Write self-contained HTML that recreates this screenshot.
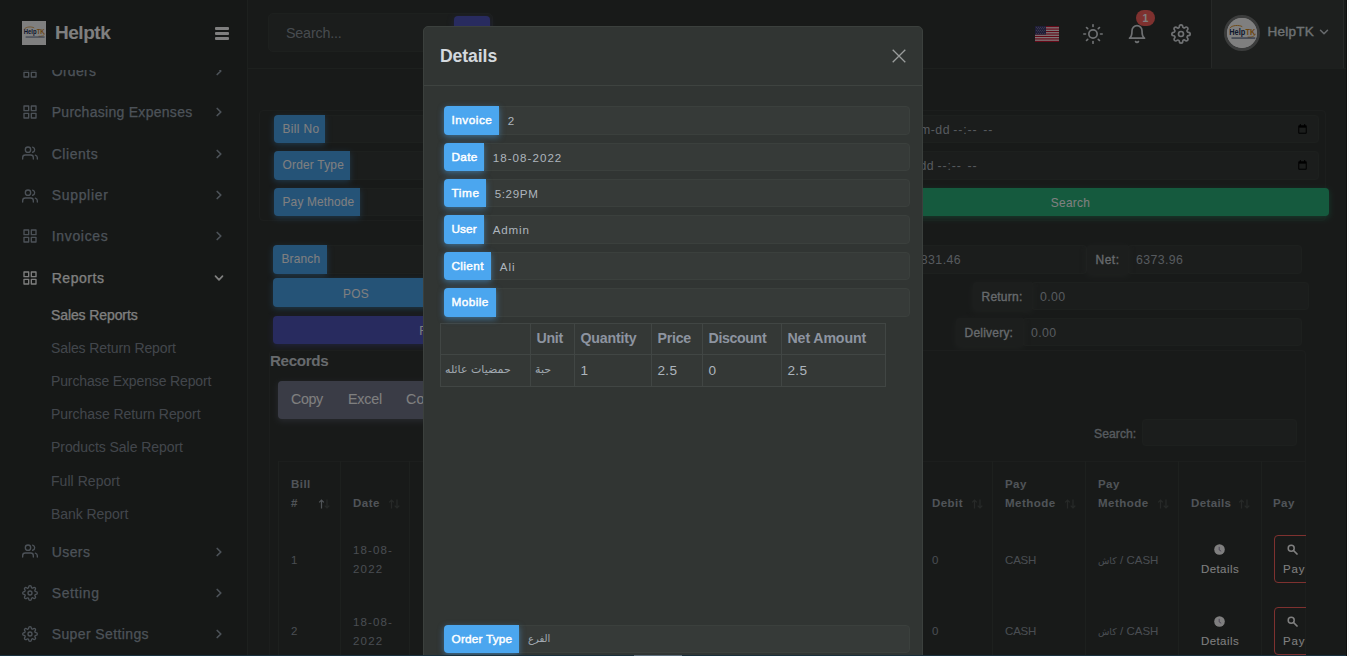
<!DOCTYPE html>
<html lang="en">
<head>
<meta charset="utf-8">
<title>Helptk - Sales Reports</title>
<style>
*{box-sizing:border-box;margin:0;padding:0}
html,body{width:1349px;height:656px;overflow:hidden;background:#313533;font-family:"Liberation Sans","DejaVu Sans",sans-serif;font-size:13px;color:#adb5bd}
.abs{position:absolute}
svg{display:block}
/* ---------- sidebar ---------- */
#sidebar{z-index:2;position:absolute;left:0;top:0;width:248px;height:656px;background:#2c302e;border-right:1px solid #3b403d;overflow:hidden}
#brand{position:absolute;left:0;top:0;width:247px;height:70px;background:#2c302e;z-index:3}
#logo{position:absolute;left:22px;top:21px;width:24px;height:24px;background:#ffffff;overflow:hidden}
#brandname{position:absolute;left:55px;top:21px;font-weight:bold;color:#ffffff;line-height:24px}
#burger{position:absolute;left:214.8px;top:26.5px;width:14.6px;height:13px}
#burger i{position:absolute;left:0;width:14.6px;height:3px;border-radius:1px;background:#ffffff}
.mi{position:absolute;left:0;width:247px;height:24px;color:#99a4b1;font-size:14px;line-height:24px;-webkit-text-stroke:.25px currentColor}
.mi .ic{position:absolute;left:22px;top:4px;width:16px;height:16px;stroke:#99a4b1;fill:none;stroke-width:2;stroke-linecap:round;stroke-linejoin:round}
.mi .tx{position:absolute;left:51.7px;top:0;white-space:nowrap}
.mi .ch{position:absolute;left:214px;top:7px;width:10px;height:10px;stroke:#99a4b1;fill:none;stroke-width:1.7;stroke-linecap:round;stroke-linejoin:round}
.mi.act{color:#ffffff}
.mi.act .ic,.mi.act .ch{stroke:#ffffff}
.si{position:absolute;left:51px;height:20px;line-height:20px;font-size:14px;color:#858d98;white-space:nowrap}
.si.act{color:#ffffff;-webkit-text-stroke:.25px currentColor}
/* ---------- header ---------- */
#header{z-index:2;position:absolute;left:248px;top:0;width:1101px;height:69px;background:#313533;border-bottom:1px solid #3b403d}
#sbox{position:absolute;left:20px;top:13px;width:225px;height:39px;background:#363a38;border:1px solid #3b403d;border-radius:5px}
#sbox span{position:absolute;left:17px;top:10px;color:#8f979f;line-height:18px}
#sbtn{position:absolute;left:185px;top:2px;width:36px;height:34px;background:#5156be;border-radius:4px;box-shadow:0 2px 6px rgba(81,86,190,.5)}
.hic{position:absolute;stroke:#dfe3e7;fill:none;stroke-width:2;stroke-linecap:round;stroke-linejoin:round}
#flag{position:absolute;left:787px;top:26px;width:24px;height:16px}
#badge{position:absolute;left:888px;top:10px;width:19px;height:16px;border-radius:8px;background:#fd625e;color:#fff;font-size:10.5px;font-weight:bold;text-align:center;line-height:16px}
#user{position:absolute;left:963px;top:0;width:133px;height:68px;background:#3a3e3c;border-left:1px solid #4c504e;border-right:1px solid #4c504e}
#avatar{position:absolute;left:12px;top:15px;width:36px;height:36px;border-radius:50%;background:#ffffff;border:3px solid #767978;overflow:hidden}
#uname{position:absolute;left:55.5px;top:23px;color:#dfe3e7;line-height:18px;-webkit-text-stroke:.35px currentColor}
/* ---------- main ---------- */
#main{z-index:1;position:absolute;left:0;top:0;width:1349px;height:656px;background:#313533;overflow:hidden}
.card{position:absolute;background:#313533;border:1px solid #383c3a;border-radius:4px}
.lbl{position:absolute;background:#4ba6ef;color:#fff;border-radius:4px 0 0 4px;font-size:12.3px;line-height:28px;height:28px;padding-left:8.5px;white-space:nowrap;box-shadow:0 2px 6px rgba(75,166,239,.5);letter-spacing:.25px}
.inp{position:absolute;background:#363a38;border:1px solid #3b403d;border-radius:4px;height:28px;font-size:12.3px;line-height:26px;color:#adb5bd;white-space:nowrap}
.dlbl{position:absolute;background:#393d3b;border-radius:4px 0 0 4px;height:29px;line-height:29px;color:#ced4da;padding-left:8.5px;white-space:nowrap;box-shadow:0 2px 6px rgba(75,80,77,.5);-webkit-text-stroke:.3px currentColor}
.th{position:absolute;font-weight:bold;color:#a0a8b0;line-height:19px;white-space:nowrap}
.td{position:absolute;color:#939ba4;line-height:19px;white-space:nowrap}
.vl{position:absolute;width:1px;background:#3b403d}
.sort{position:absolute;width:13px;height:10px}
/* ---------- modal ---------- */
#backdrop{z-index:10;position:absolute;left:0;top:0;width:1349px;height:656px;background:rgba(0,0,0,.5)}
#modal{z-index:11;position:absolute;left:423px;top:26px;width:500px;height:700px;background:#313533;border:1px solid #3b403d;border-radius:5px}
#mtitle{position:absolute;font-weight:bold;color:#d4d9de;line-height:24px}
#mhr{position:absolute;left:0;top:58px;width:498px;height:1px;background:#3e4340}
.mlbl{position:absolute;left:20px;background:#4ba6ef;color:#fff;border-radius:4px 0 0 4px;font-size:11.8px;-webkit-text-stroke:.45px #fff;line-height:28px;height:28px;padding-left:7.5px;white-space:nowrap;box-shadow:0 2px 6px rgba(75,166,239,.5);z-index:2}
.minp{position:absolute;background:#363a38;border:1px solid #3b403d;border-radius:0 4px 4px 0;height:28px;font-size:11.6px;line-height:28px;color:#adb5bd;white-space:nowrap;letter-spacing:.55px;padding-left:7.7px}
#mtable{position:absolute;left:16px;top:296px;border-collapse:collapse;font-size:13.6px;color:#adb5bd;letter-spacing:.3px}
#mtable td,#mtable th{border:1px solid #414644;height:31.5px;padding:0 0 0 5.5px;text-align:left;white-space:nowrap;background:#343836}
#mtable th{font-weight:bold;color:#8d94a0;height:31px;padding-bottom:2px}
#mtable td{height:32px;padding-bottom:1px}
#mtable td.ar{font-family:"DejaVu Sans","Liberation Sans",sans-serif;font-size:11px;padding-left:4px;letter-spacing:0;color:#a2aab2;padding-bottom:3px}
#strip-r{z-index:12;position:absolute;left:1346px;top:0;width:3px;height:656px;background:#0e0f0e}
#strip-r i{position:absolute;left:1px;top:0;width:1px;height:656px;background:#fff}
#strip-r b{position:absolute;left:2px;top:0;width:1px;height:656px;background:#f1f1f1}
#strip-b{z-index:12;position:absolute;left:0;top:655px;width:1346px;height:1px;background:#18303e}
#strip-b i{position:absolute;left:634px;top:0;width:48px;height:1px;background:#5a6e7d}
.btn{border-radius:4px;color:#fff;font-size:12.3px;text-align:center;letter-spacing:.3px}
.arab{font-family:"DejaVu Sans","Liberation Sans",sans-serif}
</style>
</head>
<body>
<svg width="0" height="0" style="position:absolute"><defs>
<symbol id="i-grid" viewBox="0 0 24 24"><rect x="3" y="3" width="7" height="7"/><rect x="14" y="3" width="7" height="7"/><rect x="14" y="14" width="7" height="7"/><rect x="3" y="14" width="7" height="7"/></symbol>
<symbol id="i-users" viewBox="0 0 24 24"><path d="M17 21v-2a4 4 0 0 0-4-4H5a4 4 0 0 0-4 4v2"/><circle cx="9" cy="7" r="4"/><path d="M23 21v-2a4 4 0 0 0-3-3.87"/><path d="M16 3.13a4 4 0 0 1 0 7.75"/></symbol>
<symbol id="i-gear" viewBox="0 0 24 24"><circle cx="12" cy="12" r="3"/><path d="M19.4 15a1.65 1.65 0 0 0 .33 1.82l.06.06a2 2 0 0 1 0 2.83 2 2 0 0 1-2.83 0l-.06-.06a1.65 1.65 0 0 0-1.82-.33 1.65 1.65 0 0 0-1 1.51V21a2 2 0 0 1-2 2 2 2 0 0 1-2-2v-.09A1.65 1.65 0 0 0 9 19.4a1.65 1.65 0 0 0-1.82.33l-.06.06a2 2 0 0 1-2.83 0 2 2 0 0 1 0-2.83l.06-.06a1.65 1.65 0 0 0 .33-1.82 1.65 1.65 0 0 0-1.51-1H3a2 2 0 0 1-2-2 2 2 0 0 1 2-2h.09A1.65 1.65 0 0 0 4.6 9a1.65 1.65 0 0 0-.33-1.82l-.06-.06a2 2 0 0 1 0-2.83 2 2 0 0 1 2.83 0l.06.06a1.65 1.65 0 0 0 1.82.33H9a1.65 1.65 0 0 0 1-1.51V3a2 2 0 0 1 2-2 2 2 0 0 1 2 2v.09a1.65 1.65 0 0 0 1 1.51 1.65 1.65 0 0 0 1.82-.33l.06-.06a2 2 0 0 1 2.83 0 2 2 0 0 1 0 2.83l-.06.06a1.65 1.65 0 0 0-.33 1.82V9a1.65 1.65 0 0 0 1.51 1H21a2 2 0 0 1 2 2 2 2 0 0 1-2 2h-.09a1.65 1.65 0 0 0-1.51 1z"/></symbol>
<symbol id="i-sun" viewBox="0 0 24 24"><circle cx="12" cy="12" r="5"/><line x1="12" y1="1" x2="12" y2="3"/><line x1="12" y1="21" x2="12" y2="23"/><line x1="4.22" y1="4.22" x2="5.64" y2="5.64"/><line x1="18.36" y1="18.36" x2="19.78" y2="19.78"/><line x1="1" y1="12" x2="3" y2="12"/><line x1="21" y1="12" x2="23" y2="12"/><line x1="4.22" y1="19.78" x2="5.64" y2="18.36"/><line x1="18.36" y1="5.64" x2="19.78" y2="4.22"/></symbol>
<symbol id="i-bell" viewBox="0 0 24 24"><path d="M18 8A6 6 0 0 0 6 8c0 7-3 9-3 9h18s-3-2-3-9"/><path d="M13.73 21a2 2 0 0 1-3.46 0"/></symbol>
<symbol id="i-cr" viewBox="0 0 10 10"><polyline points="3.2,1.5 6.8,5 3.2,8.5"/></symbol>
<symbol id="i-cd" viewBox="0 0 10 10"><polyline points="1.5,3.2 5,6.8 8.5,3.2"/></symbol>
<symbol id="i-sort" viewBox="0 0 13 10"><path d="M3.5 9.5V1M1 3.3L3.5 0.8L6 3.3" fill="none" stroke-width="1.3"/><path d="M9.5 0.5V9M7 6.7L9.5 9.2L12 6.7" fill="none" stroke-width="1.3"/></symbol>
</defs></svg>
<div id="main">
<div class="card" style="left:259px;top:110px;width:1067px;height:111px"></div>
<div class="inp" style="left:300px;top:115px;width:480px;height:28px;line-height:28px;padding-left:9px;"></div>
<div class="lbl" style="left:274px;top:115px;width:51px;height:28px;line-height:28px;font-size:11.9px;letter-spacing:0.363px">Bill No</div>
<div class="inp" style="left:300px;top:151px;width:480px;height:29px;line-height:29px;padding-left:9px;"></div>
<div class="lbl" style="left:274px;top:151px;width:76px;height:29px;line-height:29px;font-size:11.9px;letter-spacing:0.221px">Order Type</div>
<div class="inp" style="left:300px;top:188px;width:480px;height:28px;line-height:28px;padding-left:9px;"></div>
<div class="lbl" style="left:274px;top:188px;width:86px;height:28px;line-height:28px;font-size:11.9px;letter-spacing:0.167px">Pay Methode</div>
<div class="inp" style="left:850px;top:115px;width:469px;height:28px;line-height:28px;padding-left:9px;"><span style="position:absolute;right:368px;letter-spacing:.5px;font-size:12.3px">mm-dd</span><span style="position:absolute;left:102.29999999999995px;letter-spacing:.9px;font-size:12.3px">--:--</span><span style="position:absolute;left:132.29999999999995px;letter-spacing:.9px;font-size:12.3px">--</span><svg style="position:absolute;right:11.5px;top:8px;width:9px;height:10px" viewBox="0 0 10 11"><rect x="0.3" y="1.2" width="9.4" height="9.5" rx="1" fill="#000"/><rect x="1.4" y="4" width="7.2" height="5.6" fill="#363a38"/><rect x="2" y="0" width="1.2" height="2.2" fill="#000"/><rect x="6.8" y="0" width="1.2" height="2.2" fill="#000"/></svg></div>
<div class="inp" style="left:850px;top:151px;width:469px;height:29px;line-height:29px;padding-left:9px;"><span style="position:absolute;right:383.79999999999995px;letter-spacing:.5px;font-size:12.3px">mm-dd</span><span style="position:absolute;left:86.5px;letter-spacing:.9px;font-size:12.3px">--:--</span><span style="position:absolute;left:116.5px;letter-spacing:.9px;font-size:12.3px">--</span><svg style="position:absolute;right:11.5px;top:8px;width:9px;height:10px" viewBox="0 0 10 11"><rect x="0.3" y="1.2" width="9.4" height="9.5" rx="1" fill="#000"/><rect x="1.4" y="4" width="7.2" height="5.6" fill="#363a38"/><rect x="2" y="0" width="1.2" height="2.2" fill="#000"/><rect x="6.8" y="0" width="1.2" height="2.2" fill="#000"/></svg></div>
<div class="abs btn" style="left:812px;top:188px;width:517px;height:28px;background:#2ab57d;line-height:30px;font-size:11.9px;box-shadow:0 2px 6px rgba(42,181,125,.5)">Search</div>
<div class="inp" style="left:300px;top:245px;width:260px;height:29px;line-height:29px;padding-left:9px;"></div>
<div class="lbl" style="left:273px;top:245px;width:54px;height:29px;line-height:29px;font-size:11.9px;letter-spacing:0.173px">Branch</div>
<div class="abs btn" style="left:273px;top:278px;width:166px;height:29px;background:#4ba6ef;line-height:32px;font-size:11.9px;box-shadow:0 2px 6px rgba(75,166,239,.5)">POS</div>
<div class="abs btn" style="left:273px;top:316px;width:325px;height:28px;background:#5156be;line-height:31px;font-size:11.9px;box-shadow:0 2px 6px rgba(81,86,190,.5)">Reset</div>
<div class="inp" style="left:880px;top:245px;width:207px;height:29px;line-height:29px;padding-left:9px;"><span style="position:absolute;left:32.5px;letter-spacing:.45px">5831.46</span></div>
<div class="inp" style="left:1127px;top:245px;width:175px;height:29px;line-height:29px;padding-left:8px;letter-spacing:.4px">6373.96</div>
<div class="dlbl" style="left:1087px;top:245px;width:41px;height:29px;line-height:31px;font-size:12px;letter-spacing:0.515px">Net:</div>
<div class="inp" style="left:1031px;top:282px;width:278px;height:28px;line-height:28px;padding-left:8px;letter-spacing:.4px">0.00</div>
<div class="dlbl" style="left:973px;top:282px;width:59px;height:28px;line-height:31px;font-size:12px;letter-spacing:0.233px">Return:</div>
<div class="inp" style="left:1022px;top:318px;width:280px;height:28px;line-height:28px;padding-left:8px;letter-spacing:.4px">0.00</div>
<div class="dlbl" style="left:956px;top:318px;width:67px;height:28px;line-height:31px;font-size:12px;letter-spacing:0.222px">Delivery:</div>
<div class="card" style="left:269px;top:350px;width:1037px;height:330px;border-radius:4px 4px 0 0"></div>
<div class="abs" style="left:270px;top:350px;font-weight:bold;color:#ced4da;line-height:22px;font-size:15.2px;letter-spacing:-0.361px">Records</div>
<div class="abs" style="left:278px;top:381px;width:420px;height:38px;background:#74788d;border-radius:4px;box-shadow:0 2px 6px rgba(116,120,141,.5);color:#fff;line-height:37px;white-space:nowrap"><span style="position:absolute;left:13px;font-size:14.3px;letter-spacing:-0.416px">Copy</span><span style="position:absolute;left:70px;font-size:14.3px;letter-spacing:-0.206px">Excel</span><span style="position:absolute;left:128px;font-size:14.3px;letter-spacing:.2px">Column visibility</span></div>
<div class="abs" style="left:1094px;top:425px;color:#adb5bd;line-height:18px;-webkit-text-stroke:.35px currentColor;font-size:12.2px;letter-spacing:0.043px">Search:</div>
<div class="inp" style="left:1142px;top:419px;width:155px;height:27px;line-height:27px;padding-left:9px;"></div>
<div class="abs" style="left:278px;top:461px;width:1027px;height:1px;background:#383c3a"></div>
<div class="vl" style="left:278px;top:461px;height:195px"></div>
<div class="vl" style="left:340px;top:461px;height:195px"></div>
<div class="vl" style="left:409px;top:461px;height:195px"></div>
<div class="vl" style="left:992px;top:461px;height:195px"></div>
<div class="vl" style="left:1085px;top:461px;height:195px"></div>
<div class="vl" style="left:1178px;top:461px;height:195px"></div>
<div class="vl" style="left:1261px;top:461px;height:195px"></div>
<div class="th" style="left:291px;top:475px;font-size:11.5px;letter-spacing:0.443px">Bill</div>
<div class="th" style="left:291px;top:494px;font-size:11.5px">#</div>
<svg class="sort" style="left:318px;top:499px" viewBox="0 0 13 10"><path d="M3.5 9.5V1.2M1.2 3.4L3.5 1L5.8 3.4" fill="none" stroke="#a0a8b0" stroke-width="1.2"/><path d="M9 0.5V8.8M6.7 6.6L9 9L11.3 6.6" fill="none" stroke="#4e5351" stroke-width="1.2"/></svg>
<div class="th" style="left:353px;top:494px;font-size:11.5px;letter-spacing:0.494px">Date</div>
<svg class="sort" style="left:388px;top:499px" viewBox="0 0 13 10"><path d="M3.5 9.5V1.2M1.2 3.4L3.5 1L5.8 3.4" fill="none" stroke="#4e5351" stroke-width="1.2"/><path d="M9 0.5V8.8M6.7 6.6L9 9L11.3 6.6" fill="none" stroke="#4e5351" stroke-width="1.2"/></svg>
<div class="th" style="left:932px;top:494px;font-size:11.5px;letter-spacing:0.443px">Debit</div>
<svg class="sort" style="left:971px;top:499px" viewBox="0 0 13 10"><path d="M3.5 9.5V1.2M1.2 3.4L3.5 1L5.8 3.4" fill="none" stroke="#4e5351" stroke-width="1.2"/><path d="M9 0.5V8.8M6.7 6.6L9 9L11.3 6.6" fill="none" stroke="#4e5351" stroke-width="1.2"/></svg>
<div class="th" style="left:1005px;top:475px;font-size:11.5px;letter-spacing:0.426px">Pay</div>
<div class="th" style="left:1005px;top:494px;font-size:11.5px;letter-spacing:0.49px">Methode</div>
<svg class="sort" style="left:1064px;top:499px" viewBox="0 0 13 10"><path d="M3.5 9.5V1.2M1.2 3.4L3.5 1L5.8 3.4" fill="none" stroke="#4e5351" stroke-width="1.2"/><path d="M9 0.5V8.8M6.7 6.6L9 9L11.3 6.6" fill="none" stroke="#4e5351" stroke-width="1.2"/></svg>
<div class="th" style="left:1098px;top:475px;font-size:11.5px;letter-spacing:0.426px">Pay</div>
<div class="th" style="left:1098px;top:494px;font-size:11.5px;letter-spacing:0.49px">Methode</div>
<svg class="sort" style="left:1157px;top:499px" viewBox="0 0 13 10"><path d="M3.5 9.5V1.2M1.2 3.4L3.5 1L5.8 3.4" fill="none" stroke="#4e5351" stroke-width="1.2"/><path d="M9 0.5V8.8M6.7 6.6L9 9L11.3 6.6" fill="none" stroke="#4e5351" stroke-width="1.2"/></svg>
<div class="th" style="left:1191px;top:494px;font-size:11.5px;letter-spacing:0.367px">Details</div>
<svg class="sort" style="left:1238px;top:499px" viewBox="0 0 13 10"><path d="M3.5 9.5V1.2M1.2 3.4L3.5 1L5.8 3.4" fill="none" stroke="#4e5351" stroke-width="1.2"/><path d="M9 0.5V8.8M6.7 6.6L9 9L11.3 6.6" fill="none" stroke="#4e5351" stroke-width="1.2"/></svg>
<div class="th" style="left:1273px;top:494px;font-size:11.5px;letter-spacing:0.426px">Pay</div>
<div class="td" style="left:291px;top:551px;font-size:11.5px;">1</div>
<div class="td" style="left:353px;top:540.9px;font-size:11.5px;letter-spacing:1.094px;">18-08-</div>
<div class="td" style="left:353px;top:559.9px;font-size:11.5px;letter-spacing:1.209px;">2022</div>
<div class="td" style="left:932px;top:551px;font-size:11.5px;">0</div>
<div class="td" style="left:1005px;top:551px;font-size:11.5px;letter-spacing:-0.178px;">CASH</div>
<div class="td" style="left:1098px;top:551px;font-size:11.5px"><span class="arab" style="font-size:9.3px;letter-spacing:0">كاش</span><span style="font-size:11.5px;letter-spacing:-0.025px;padding-left:3.5px">/ CASH</span></div>
<svg class="abs" style="left:1214px;top:544px;width:11px;height:11px" viewBox="0 0 11 11"><circle cx="5.5" cy="5.5" r="5.3" fill="#ffffff"/><path d="M5.2 2.8V6L7.2 7.2" fill="none" stroke="#9d8fb0" stroke-width="1"/></svg>
<div class="abs" style="left:1190px;top:560px;width:60px;text-align:center;color:#ffffff;line-height:19px;font-size:11.5px;letter-spacing:0.427px">Details</div>
<div class="abs" style="left:1274px;top:535px;width:60px;height:48px;border:1px solid #fd625e;border-radius:4px"></div>
<svg class="abs" style="left:1287px;top:544px;width:11px;height:11px" viewBox="0 0 11 11"><circle cx="4.2" cy="4.2" r="3" fill="none" stroke="#ffffff" stroke-width="1.5"/><path d="M6.5 6.5L10 10" stroke="#ffffff" stroke-width="1.7" stroke-linecap="round"/></svg>
<div class="abs" style="left:1283px;top:560px;color:#ffffff;line-height:19px;font-size:11.5px;letter-spacing:0.846px">Pay</div>
<div class="td" style="left:291px;top:622.0px;font-size:11.5px;">2</div>
<div class="td" style="left:353px;top:612.5px;font-size:11.5px;letter-spacing:1.094px;">18-08-</div>
<div class="td" style="left:353px;top:631.5px;font-size:11.5px;letter-spacing:1.209px;">2022</div>
<div class="td" style="left:932px;top:622.0px;font-size:11.5px;">0</div>
<div class="td" style="left:1005px;top:622.0px;font-size:11.5px;letter-spacing:-0.178px;">CASH</div>
<div class="td" style="left:1098px;top:622.0px;font-size:11.5px"><span class="arab" style="font-size:9.3px;letter-spacing:0">كاش</span><span style="font-size:11.5px;letter-spacing:-0.025px;padding-left:3.5px">/ CASH</span></div>
<svg class="abs" style="left:1214px;top:615.5px;width:11px;height:11px" viewBox="0 0 11 11"><circle cx="5.5" cy="5.5" r="5.3" fill="#ffffff"/><path d="M5.2 2.8V6L7.2 7.2" fill="none" stroke="#9d8fb0" stroke-width="1"/></svg>
<div class="abs" style="left:1190px;top:631.5px;width:60px;text-align:center;color:#ffffff;line-height:19px;font-size:11.5px;letter-spacing:0.427px">Details</div>
<div class="abs" style="left:1274px;top:606.5px;width:60px;height:48px;border:1px solid #fd625e;border-radius:4px"></div>
<svg class="abs" style="left:1287px;top:615.5px;width:11px;height:11px" viewBox="0 0 11 11"><circle cx="4.2" cy="4.2" r="3" fill="none" stroke="#ffffff" stroke-width="1.5"/><path d="M6.5 6.5L10 10" stroke="#ffffff" stroke-width="1.7" stroke-linecap="round"/></svg>
<div class="abs" style="left:1283px;top:631.5px;color:#ffffff;line-height:19px;font-size:11.5px;letter-spacing:0.846px">Pay</div>
<div class="abs" style="left:1306px;top:351px;width:43px;height:305px;background:#313533"></div>
</div>
<div id="sidebar">
<div id="menu">
<div class="mi" style="top:59px"><svg class="ic" style="top:4px"><use href="#i-grid"/></svg><span class="tx" style="font-size:14px;letter-spacing:.3px">Orders</span><svg class="ch"><use href="#i-cr"/></svg></div>
<div class="mi" style="top:100px"><svg class="ic" style="top:4px"><use href="#i-grid"/></svg><span class="tx" style="font-size:14px;letter-spacing:0.283px">Purchasing Expenses</span><svg class="ch"><use href="#i-cr"/></svg></div>
<div class="mi" style="top:142px"><svg class="ic" style="top:3px"><use href="#i-users"/></svg><span class="tx" style="font-size:14px;letter-spacing:0.537px">Clients</span><svg class="ch"><use href="#i-cr"/></svg></div>
<div class="mi" style="top:183px"><svg class="ic" style="top:4.5px"><use href="#i-users"/></svg><span class="tx" style="font-size:14px;letter-spacing:0.678px">Supplier</span><svg class="ch"><use href="#i-cr"/></svg></div>
<div class="mi" style="top:224.2px"><svg class="ic" style="top:4.2px"><use href="#i-grid"/></svg><span class="tx" style="font-size:14px;letter-spacing:0.68px">Invoices</span><svg class="ch"><use href="#i-cr"/></svg></div>
<div class="mi act" style="top:266px"><svg class="ic" style="top:3.8px"><use href="#i-grid"/></svg><span class="tx" style="font-size:14px;letter-spacing:0.548px">Reports</span><svg class="ch"><use href="#i-cd"/></svg></div>
<div class="mi" style="top:539.5px"><svg class="ic" style="top:3.7px"><use href="#i-users"/></svg><span class="tx" style="font-size:14px;letter-spacing:0.414px">Users</span><svg class="ch"><use href="#i-cr"/></svg></div>
<div class="mi" style="top:581px"><svg class="ic" style="top:4.1px"><use href="#i-gear"/></svg><span class="tx" style="font-size:14px;letter-spacing:0.621px">Setting</span><svg class="ch"><use href="#i-cr"/></svg></div>
<div class="mi" style="top:622px"><svg class="ic" style="top:4px"><use href="#i-gear"/></svg><span class="tx" style="font-size:14px;letter-spacing:0.39px">Super Settings</span><svg class="ch"><use href="#i-cr"/></svg></div>
<div class="si act" style="top:305px;font-size:14px;letter-spacing:-0.101px">Sales Reports</div>
<div class="si" style="top:338px;font-size:14px;letter-spacing:-0.107px">Sales Return Report</div>
<div class="si" style="top:371px;font-size:14px;letter-spacing:-0.137px">Purchase Expense Report</div>
<div class="si" style="top:404px;font-size:14px;letter-spacing:-0.069px">Purchase Return Report</div>
<div class="si" style="top:437px;font-size:14px;letter-spacing:-0.061px">Products Sale Report</div>
<div class="si" style="top:471px;font-size:14px;letter-spacing:0.045px">Full Report</div>
<div class="si" style="top:504.29999999999995px;font-size:14px;letter-spacing:-0.051px">Bank Report</div>
</div>
<div id="brand">
  <div id="logo"><svg viewBox="0 0 24 24" width="100%" height="100%"><rect width="24" height="24" fill="#ffffff"/><path d="M2.2 8.2C4 5.6 9.5 5.4 12.2 6.9" fill="none" stroke="#d98a1c" stroke-width="0.7"/><path d="M16.5 15.2C19.5 15.6 22.3 14.6 22.6 12.6" fill="none" stroke="#d98a1c" stroke-width="0.6"/><text x="1.8" y="13.3" font-family="Liberation Sans, sans-serif" font-weight="bold" font-size="7.8" fill="#1a2f5a" textLength="12.8" lengthAdjust="spacingAndGlyphs">Help</text><text x="14.8" y="13.3" font-family="Liberation Sans, sans-serif" font-weight="bold" font-size="7.8" fill="#d98a1c" textLength="7.8" lengthAdjust="spacingAndGlyphs">TK</text><rect x="3.6" y="15.4" width="19" height="1.3" fill="#1a2f5a" opacity=".55"/></svg></div>
  <div id="brandname" style="font-size:19px;letter-spacing:-0.472px">Helptk</div>
  <div id="burger"><i style="top:0"></i><i style="top:5px"></i><i style="top:10px"></i></div>
</div>
</div>
<div id="header">
  <div id="sbox"><span style="font-size:14.3px;letter-spacing:-0.184px">Search...</span><div id="sbtn"></div></div>
  <svg id="flag" viewBox="0 0 24 16"><rect width="24" height="16" fill="#ffffff"/><rect y="0.000" width="24" height="1.231" fill="#c8102e"/><rect y="2.462" width="24" height="1.231" fill="#c8102e"/><rect y="4.923" width="24" height="1.231" fill="#c8102e"/><rect y="7.385" width="24" height="1.231" fill="#c8102e"/><rect y="9.846" width="24" height="1.231" fill="#c8102e"/><rect y="12.308" width="24" height="1.231" fill="#c8102e"/><rect y="14.769" width="24" height="1.231" fill="#c8102e"/><rect width="11" height="8.6" fill="#3c3b6e"/><circle cx="1.40" cy="1.20" r="0.45" fill="#b8b8d0"/><circle cx="3.50" cy="1.20" r="0.45" fill="#b8b8d0"/><circle cx="5.60" cy="1.20" r="0.45" fill="#b8b8d0"/><circle cx="7.70" cy="1.20" r="0.45" fill="#b8b8d0"/><circle cx="9.80" cy="1.20" r="0.45" fill="#b8b8d0"/><circle cx="2.45" cy="2.75" r="0.45" fill="#b8b8d0"/><circle cx="4.55" cy="2.75" r="0.45" fill="#b8b8d0"/><circle cx="6.65" cy="2.75" r="0.45" fill="#b8b8d0"/><circle cx="8.75" cy="2.75" r="0.45" fill="#b8b8d0"/><circle cx="1.40" cy="4.30" r="0.45" fill="#b8b8d0"/><circle cx="3.50" cy="4.30" r="0.45" fill="#b8b8d0"/><circle cx="5.60" cy="4.30" r="0.45" fill="#b8b8d0"/><circle cx="7.70" cy="4.30" r="0.45" fill="#b8b8d0"/><circle cx="9.80" cy="4.30" r="0.45" fill="#b8b8d0"/><circle cx="2.45" cy="5.85" r="0.45" fill="#b8b8d0"/><circle cx="4.55" cy="5.85" r="0.45" fill="#b8b8d0"/><circle cx="6.65" cy="5.85" r="0.45" fill="#b8b8d0"/><circle cx="8.75" cy="5.85" r="0.45" fill="#b8b8d0"/><circle cx="1.40" cy="7.40" r="0.45" fill="#b8b8d0"/><circle cx="3.50" cy="7.40" r="0.45" fill="#b8b8d0"/><circle cx="5.60" cy="7.40" r="0.45" fill="#b8b8d0"/><circle cx="7.70" cy="7.40" r="0.45" fill="#b8b8d0"/><circle cx="9.80" cy="7.40" r="0.45" fill="#b8b8d0"/></svg>
  <svg class="hic" style="left:835px;top:24px;width:20px;height:20px"><use href="#i-sun"/></svg>
  <svg class="hic" style="left:879px;top:24px;width:20px;height:20px"><use href="#i-bell"/></svg>
  <div id="badge">1</div>
  <svg class="hic" style="left:923px;top:24px;width:20px;height:20px"><use href="#i-gear"/></svg>
  <div id="user"><div id="avatar"><svg viewBox="0 0 24 24" width="100%" height="100%"><rect width="24" height="24" fill="#ffffff"/><path d="M2.2 8.2C4 5.6 9.5 5.4 12.2 6.9" fill="none" stroke="#d98a1c" stroke-width="0.7"/><path d="M16.5 15.2C19.5 15.6 22.3 14.6 22.6 12.6" fill="none" stroke="#d98a1c" stroke-width="0.6"/><text x="1.8" y="13.3" font-family="Liberation Sans, sans-serif" font-weight="bold" font-size="7.8" fill="#1a2f5a" textLength="12.8" lengthAdjust="spacingAndGlyphs">Help</text><text x="14.8" y="13.3" font-family="Liberation Sans, sans-serif" font-weight="bold" font-size="7.8" fill="#d98a1c" textLength="7.8" lengthAdjust="spacingAndGlyphs">TK</text><rect x="3.6" y="15.4" width="19" height="1.3" fill="#1a2f5a" opacity=".55"/></svg></div><div id="uname" style="font-size:13.5px;letter-spacing:0.253px">HelpTK</div>
  <svg class="hic" style="left:107px;top:27px;width:10px;height:10px;stroke:#ced4da;stroke-width:1.5"><use href="#i-cd"/></svg></div>
</div>
<div id="backdrop"></div>
<div id="modal">
<div id="mtitle" style="left:16px;top:17px;font-size:17.6px;letter-spacing:-0.083px">Details</div>
<svg class="abs" style="left:468px;top:22px;width:14px;height:14px" viewBox="0 0 14 14"><path d="M0.7 0.7L13.3 13.3M13.3 0.7L0.7 13.3" stroke="#9a9d9c" stroke-width="1.3" fill="none"/></svg>
<div id="mhr" style="top:58px"></div>
<div class="minp" style="left:75px;top:79px;width:411px;height:29px;line-height:28px">2</div>
<div class="mlbl" style="left:20px;top:79px;width:55px;height:29px;line-height:28px;font-size:11.8px;letter-spacing:0.492px">Invoice</div>
<div class="minp" style="left:60px;top:116px;width:426px;height:28px;line-height:28px;font-size:11.6px;letter-spacing:1.035px">18-08-2022</div>
<div class="mlbl" style="left:20px;top:116px;width:40px;height:28px;line-height:28px;font-size:11.8px;letter-spacing:0.274px">Date</div>
<div class="minp" style="left:62px;top:152px;width:424px;height:28px;line-height:28px;font-size:11.6px;letter-spacing:0.632px">5:29PM</div>
<div class="mlbl" style="left:20px;top:152px;width:42px;height:28px;line-height:28px;font-size:11.8px;letter-spacing:0.588px">Time</div>
<div class="minp" style="left:60px;top:188px;width:426px;height:29px;line-height:28px;font-size:11.6px;letter-spacing:0.863px">Admin</div>
<div class="mlbl" style="left:20px;top:188px;width:40px;height:29px;line-height:28px;font-size:11.8px;letter-spacing:0.074px">User</div>
<div class="minp" style="left:67px;top:225px;width:419px;height:28px;line-height:28px;font-size:11.6px;letter-spacing:1.019px">Ali</div>
<div class="mlbl" style="left:20px;top:225px;width:47px;height:28px;line-height:28px;font-size:11.8px;letter-spacing:0.354px">Client</div>
<div class="minp" style="left:72px;top:261px;width:414px;height:29px;line-height:28px"></div>
<div class="mlbl" style="left:20px;top:261px;width:52px;height:29px;line-height:28px;font-size:11.8px;letter-spacing:0.416px">Mobile</div>
<table id="mtable" style="left:16px;top:296px"><tr><th style="width:90px"></th><th style="width:44px;font-size:14.2px;letter-spacing:-0.286px">Unit</th><th style="width:77px;font-size:14.2px;letter-spacing:-0.202px">Quantity</th><th style="width:51px;font-size:14.2px;letter-spacing:-0.246px">Price</th><th style="width:79px;font-size:14.2px;letter-spacing:-0.367px">Discount</th><th style="width:104px;font-size:14.2px;letter-spacing:-0.127px">Net Amount</th></tr>
<tr><td class="ar">حمضيات عائله</td><td class="ar">حبة</td><td>1</td><td>2.5</td><td>0</td><td>2.5</td></tr></table>
<div class="minp arab" style="left:95px;top:598px;width:391px;height:28px;font-size:10px;line-height:26px;letter-spacing:0;padding-left:8px;color:#a2aab2">الفرع</div>
<div class="mlbl" style="left:20px;top:598px;width:75px;font-size:11.8px;letter-spacing:0.205px">Order Type</div>
</div>
<div id="strip-r"><i></i><b></b></div>
<div id="strip-b"><i></i></div>
</body>
</html>
